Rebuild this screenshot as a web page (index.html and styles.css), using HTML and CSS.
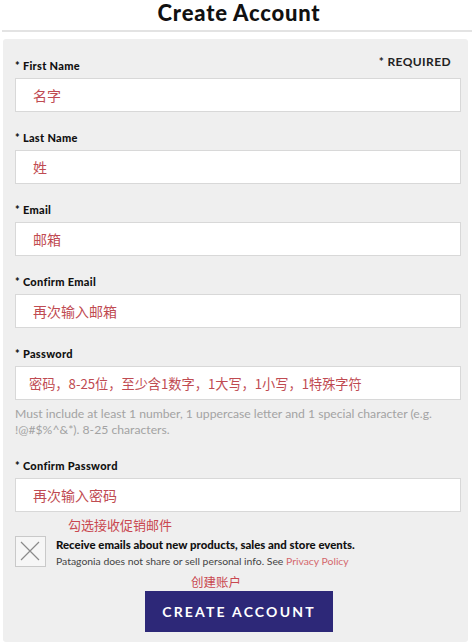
FILE: index.html
```html
<!DOCTYPE html>
<html>
<head>
  <title>Create Account</title>
  <link rel="stylesheet" href="styles.css">
</head>
<body>
  <h1 class="page-title">Create Account</h1>

  <form class="panel">
    <div class="field">
      <div class="field-head">
        <label for="first-name">* First Name</label>
        <span class="required">* REQUIRED</span>
      </div>
      <input type="text" id="first-name" placeholder="名字">
    </div>

    <div class="field">
      <label for="last-name">* Last Name</label>
      <input type="text" id="last-name" placeholder="姓">
    </div>

    <div class="field">
      <label for="email">* Email</label>
      <input type="text" id="email" placeholder="邮箱">
    </div>

    <div class="field">
      <label for="confirm-email">* Confirm Email</label>
      <input type="text" id="confirm-email" placeholder="再次输入邮箱">
    </div>

    <div class="field">
      <label for="password">* Password</label>
      <input type="text" id="password" class="input-long" placeholder="密码，8-25位，至少含1数字，1大写，1小写，1特殊字符">
      <p class="hint">Must include at least 1 number, 1 uppercase letter and 1 special character (e.g. !@#$%^&amp;*). 8-25 characters.</p>
    </div>

    <div class="field field-last">
      <label for="confirm-password">* Confirm Password</label>
      <input type="text" id="confirm-password" placeholder="再次输入密码">
    </div>

    <p class="note note-optin">勾选接收促销邮件</p>
    <div class="optin">
      <span class="checkbox">
        <svg width="30" height="30" viewBox="0 0 30 30">
          <path d="M6 6 L24 24 M24 6 L6 24" stroke="#8a8a8a" stroke-width="1.2" fill="none"/>
        </svg>
      </span>
      <div class="optin-text">
        <strong>Receive emails about new products, sales and store events.</strong>
        <span>Patagonia does not share or sell personal info. See <a href="#">Privacy Policy</a></span>
      </div>
    </div>

    <div class="submit">
      <p class="note note-submit">创建账户</p>
      <button type="button">CREATE ACCOUNT</button>
    </div>
  </form>
</body>
</html>
```

FILE: styles.css
```css
/* Create account page */
body {
  margin: 0;
  font-family: Lato, "Noto Sans", "Noto Sans CJK SC", sans-serif;
  background-color: #fff;
  color: #111;
}

.page-title {
  margin: 0 2px;
  padding: 0 0 5px 4px;
  border-bottom: 2px solid #e3e3e3;
  text-align: center;
  font-size: 22px;
  line-height: 25px;
  font-weight: 900;
  letter-spacing: 0.8px;
}

.panel {
  margin: 7px 6px 3px 3px;
  padding: 15px 7px 10px 12px;
  background-color: #efefef;
  border-radius: 3px;
}

.field {
  margin-bottom: 19px;
}

.field-last {
  margin-bottom: 3px;
}

.field-head {
  display: flex;
  justify-content: space-between;
  align-items: flex-end;
}

.required {
  font-size: 12px;
  font-weight: 700;
  letter-spacing: 0.4px;
  color: #222;
  margin-right: 10px;
  margin-bottom: 9px;
}

label {
  display: block;
  margin-bottom: 5px;
  font-size: 11px;
  line-height: 14px;
  font-weight: 900;
  letter-spacing: 0.3px;
  color: #111;
}

input[type="text"] {
  display: block;
  box-sizing: border-box;
  width: 100%;
  height: 34px;
  padding: 0 17px;
  border: 1px solid #d8d8d8;
  background-color: #fff;
  font-family: "Noto Sans CJK SC", sans-serif;
  font-size: 14px;
}

input.input-long {
  padding-left: 13px;
  font-size: 13.2px;
}

input::placeholder {
  color: #bf4b52;
}

.hint {
  margin: 6px 0 21px;
  font-size: 12.2px;
  line-height: 16px;
  color: #a3a3a3;
}

.note {
  margin: 0;
  font-family: "Noto Sans CJK SC", sans-serif;
  color: #c9474f;
}

.note-optin {
  padding-left: 53px;
  font-size: 13px;
  line-height: 19px;
}

.optin {
  display: flex;
  align-items: flex-start;
  gap: 10px;
  margin-top: 2px;
}

.checkbox {
  display: block;
  box-sizing: border-box;
  width: 31px;
  height: 31px;
  border: 1px solid #c9c9c9;
  background-color: #f6f6f6;
}

.checkbox svg {
  display: block;
  margin: -1px;
}

.optin-text {
  display: flex;
  flex-direction: column;
  padding-top: 1px;
  line-height: 16px;
}

.optin-text strong {
  font-size: 11.4px;
  font-weight: 900;
  color: #111;
}

.optin-text span {
  font-size: 10.4px;
  color: #444;
}

.optin-text a {
  color: #d4676d;
  text-decoration: none;
}

.submit {
  width: 188px;
  margin: 4px auto 0;
  padding-left: 2px;
}

.note-submit {
  padding-left: 46px;
  font-size: 12.5px;
  line-height: 18px;
}

button {
  display: block;
  width: 188px;
  height: 41px;
  border: none;
  background-color: #2d2878;
  color: #fff;
  font-family: Lato, sans-serif;
  font-size: 14px;
  font-weight: 700;
  letter-spacing: 2.2px;
  cursor: pointer;
}
```
